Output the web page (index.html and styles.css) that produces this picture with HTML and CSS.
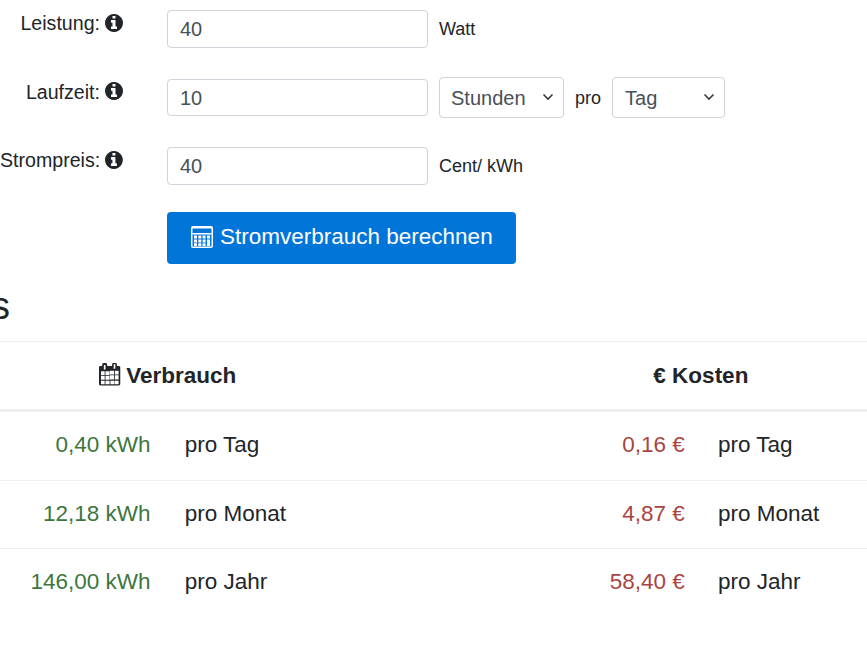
FILE: index.html
```html
<!DOCTYPE html>
<html lang="de">
<head>
<meta charset="utf-8">
<title>Stromverbrauch</title>
<link rel="stylesheet" href="styles.css">
</head>
<body>
<form class="calc">
  <div class="row">
    <label class="lbl" for="p">Leistung: <svg class="info" viewBox="0 0 1536 1536"><path d="M1024 1248v-160q0-14-9-23t-23-9h-96v-512q0-14-9-23t-23-9h-320q-14 0-23 9t-9 23v160q0 14 9 23t23 9h96v320h-96q-14 0-23 9t-9 23v160q0 14 9 23t23 9h448q14 0 23-9t9-23zm-128-896v-160q0-14-9-23t-23-9h-192q-14 0-23 9t-9 23v160q0 14 9 23t23 9h192q14 0 23-9t9-23zm640 416q0 209-103 385.5t-279.5 279.5-385.5 103-385.5-103-279.5-279.5-103-385.5 103-385.5 279.5-279.5 385.5-103 385.5 103 279.5 279.5 103 385.5z"/></svg></label>
    <div class="ctl"><input id="p" class="inp" value="40"><span class="unit">Watt</span></div>
  </div>
  <div class="row">
    <label class="lbl" for="l">Laufzeit: <svg class="info" viewBox="0 0 1536 1536"><path d="M1024 1248v-160q0-14-9-23t-23-9h-96v-512q0-14-9-23t-23-9h-320q-14 0-23 9t-9 23v160q0 14 9 23t23 9h96v320h-96q-14 0-23 9t-9 23v160q0 14 9 23t23 9h448q14 0 23-9t9-23zm-128-896v-160q0-14-9-23t-23-9h-192q-14 0-23 9t-9 23v160q0 14 9 23t23 9h192q14 0 23-9t9-23zm640 416q0 209-103 385.5t-279.5 279.5-385.5 103-385.5-103-279.5-279.5-103-385.5 103-385.5 279.5-279.5 385.5-103 385.5 103 279.5 279.5 103 385.5z"/></svg></label>
    <div class="ctl"><input id="l" class="inp" value="10"><select class="sel sel-h"><option>Stunden</option></select><span class="unit">pro</span><select class="sel sel-t"><option>Tag</option></select></div>
  </div>
  <div class="row">
    <label class="lbl" for="s">Strompreis: <svg class="info" viewBox="0 0 1536 1536"><path d="M1024 1248v-160q0-14-9-23t-23-9h-96v-512q0-14-9-23t-23-9h-320q-14 0-23 9t-9 23v160q0 14 9 23t23 9h96v320h-96q-14 0-23 9t-9 23v160q0 14 9 23t23 9h448q14 0 23-9t9-23zm-128-896v-160q0-14-9-23t-23-9h-192q-14 0-23 9t-9 23v160q0 14 9 23t23 9h192q14 0 23-9t9-23zm640 416q0 209-103 385.5t-279.5 279.5-385.5 103-385.5-103-279.5-279.5-103-385.5 103-385.5 279.5-279.5 385.5-103 385.5 103 279.5 279.5 103 385.5z"/></svg></label>
    <div class="ctl"><input id="s" class="inp" value="40"><span class="unit">Cent/ kWh</span></div>
  </div>
  <div class="row row-btn">
    <span></span>
    <div class="ctl"><button type="button" class="btn"><svg class="calc-ic" viewBox="0 0 22 22"><path fill-rule="evenodd" d="M2 0h18a2 2 0 0 1 2 2v18a2 2 0 0 1-2 2H2a2 2 0 0 1-2-2V2a2 2 0 0 1 2-2zM1.500 2.500v18h19v-18z"/><path d="M1.500 7h19v1.500h-19zM3 9.500h3v3H3zM7.300 9.500h3v3h-3zM11.600 9.500h3v3h-3zM16 9.500h3v3h-3zM3 13.500h3v3H3zM7.300 13.500h3v3h-3zM11.600 13.500h3v3h-3zM16 13.500h3v6.500h-3zM3 17.300h3v2.700H3zM7.300 17.300h3v2.700h-3zM11.600 17.300h3v2.700h-3z"/></svg> Stromverbrauch berechnen</button></div>
  </div>
</form>
<h3 class="head">Ergebnis</h3>
<table class="res">
  <thead>
    <tr>
      <th colspan="2"><svg class="cal" viewBox="0 0 1664 1792"><path d="M128 1664h288v-288h-288v288zm352 0h320v-288h-320v288zm-352-352h288v-320h-288v320zm352 0h320v-320h-320v320zm-352-384h288v-288h-288v288zm352 0h320v-288h-320v288zm384 736h320v-288h-320v288zm-384-1184v-288q0-13-9.500-22.500t-22.500-9.500h-64q-13 0-22.500 9.500t-9.500 22.500v288q0 13 9.500 22.500t22.500 9.500h64q13 0 22.500-9.500t9.500-22.500zm736 1184h288v-288h-288v288zm-384-384h320v-320h-320v320zm384 0h288v-320h-288v320zm-384-384h320v-288h-320v288zm384 0h288v-288h-288v288zm32-480v-288q0-13-9.500-22.500t-22.500-9.500h-64q-13 0-22.500 9.500t-9.500 22.500v288q0 13 9.500 22.500t22.500 9.500h64q13 0 22.500-9.500t9.500-22.500zm384-64v1280q0 52-38 90t-90 38h-1408q-52 0-90-38t-38-90v-1280q0-52 38-90t90-38h128v-96q0-66 47-113t113-47h64q66 0 113 47t47 113v96h384v-96q0-66 47-113t113-47h64q66 0 113 47t47 113v96h128q52 0 90 38t38 90z"/></svg> Verbrauch</th>
      <th colspan="2">€ Kosten</th>
    </tr>
  </thead>
  <tbody>
    <tr><td class="val green">0,40 kWh</td><td>pro Tag</td><td class="val red">0,16 €</td><td>pro Tag</td></tr>
    <tr><td class="val green">12,18 kWh</td><td>pro Monat</td><td class="val red">4,87 €</td><td>pro Monat</td></tr>
    <tr><td class="val green">146,00 kWh</td><td>pro Jahr</td><td class="val red">58,40 €</td><td>pro Jahr</td></tr>
  </tbody>
</table>
</body>
</html>
```
FILE: styles.css
```css
html, body {
  margin: 0;
  padding: 0;
  overflow: hidden;
  height: 645px;
  background: #fff;
  color: #212529;
  font-family: "Liberation Sans", Arial, sans-serif;
}
.calc {
  padding-top: 10px;
}
.row {
  display: grid;
  grid-template-columns: 167px 1fr;
  height: 68.500px;
}
.row-btn {
  height: 65px;
}
.lbl {
  display: flex;
  justify-content: flex-end;
  gap: 5px;
  padding-right: 44px;
  font-size: 19.600px;
  line-height: 27px;
  white-space: nowrap;
}
.info {
  width: 18px;
  height: 18px;
  margin-top: 3.500px;
  fill: #212529;
}
.ctl {
  display: flex;
  align-items: flex-start;
}
.inp {
  box-sizing: border-box;
  width: 261px;
  height: 37.500px;
  padding: 2px 12px 0;
  border: 1px solid #ced4da;
  border-radius: 4px;
  color: #495057;
  font: 20px "Liberation Sans", Arial, sans-serif;
  background: #fff;
}
.unit {
  font-size: 18px;
  line-height: 38px;
  margin-left: 11px;
}
.sel {
  box-sizing: border-box;
  height: 41px;
  margin-top: -2px;
  margin-left: 11px;
  padding: 2px 24px 0 11px;
  border: 1px solid #ced4da;
  border-radius: 4px;
  color: #495057;
  font: 20px "Liberation Sans", Arial, sans-serif;
  appearance: none;
  background: #fff url("data:image/svg+xml,%3Csvg xmlns='http://www.w3.org/2000/svg' width='12' height='8' viewBox='0 0 12 8'%3E%3Cpath fill='none' stroke='%23343a40' stroke-width='1.600' d='M1.500 1.500L6 6l4.500-4.500'/%3E%3C/svg%3E") no-repeat right 9px center;
}
.sel-h { width: 125px; }
.sel-t { width: 113px; padding-left: 12px; }
.btn {
  display: flex;
  align-items: center;
  gap: 7px;
  box-sizing: border-box;
  width: 349px;
  height: 52px;
  margin-top: -4px;
  padding: 0 24px 1px;
  border: 0;
  border-radius: 4px;
  background: #0275d8;
  color: #fff;
  font: 22.500px "Liberation Sans", Arial, sans-serif;
  white-space: nowrap;
}
.calc-ic {
  width: 22px;
  height: 22px;
  fill: #fff;
  flex: none;
}
.head {
  margin: 2px 0 0 -140px;
  font-size: 38px;
  font-weight: 400;
  line-height: 46px;
  white-space: nowrap;
}
.res {
  table-layout: fixed;
  width: 1066.500px;
  margin: 12.500px 0 0 -99px;
  border-collapse: collapse;
  font-size: 22.500px;
}
.res th {
  height: 67px;
  padding: 0;
  border-top: 1px solid #eceeef;
  border-bottom: 3px solid #eceeef;
  font-size: 22.500px;
  font-weight: 700;
  text-align: center;
}
.res td {
  height: 66.500px;
  padding: 0 16px 1px 17px;
  border-top: 1px solid #eceeef;
}
.res .green { padding-right: 17px; }
.res tr:first-child td { border-top: 0; }
.val { text-align: right; }
.green { color: #3c763d; }
.red { color: #a94442; }
.cal {
  width: 22px;
  height: 23px;
  margin-right: -1px;
  vertical-align: -3px;
  fill: #212529;
}
```
